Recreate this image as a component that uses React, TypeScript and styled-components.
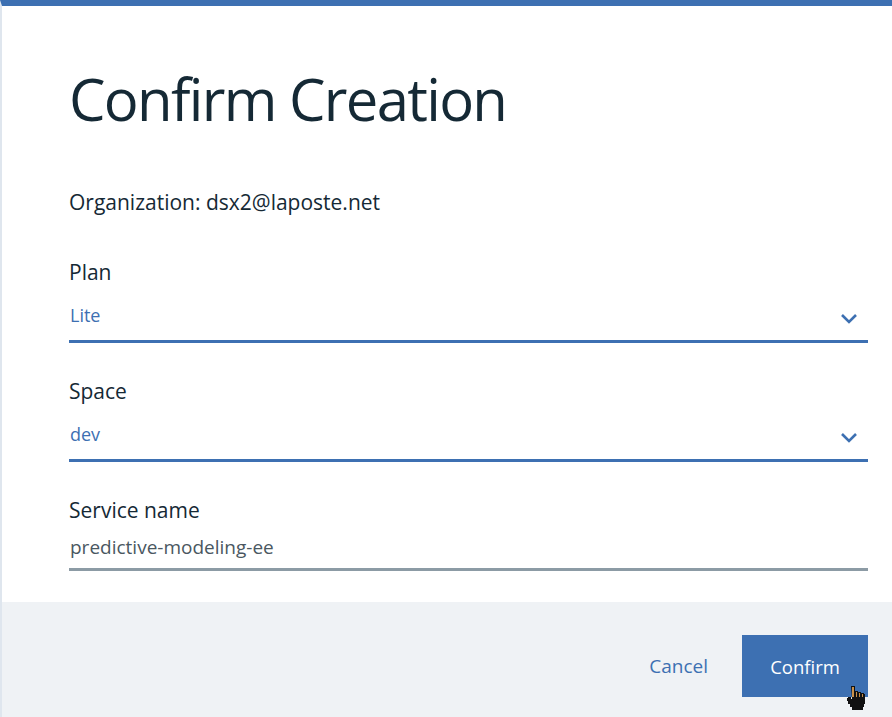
import React from "react";
import styled, {createGlobalStyle} from "styled-components";

const GlobalStyle = createGlobalStyle`
  html, body {
    margin: 0;
    padding: 0;
    background: #ffffff;
  }
  body {
    font-family: "Open Sans", "Noto Sans", sans-serif;
    color: #152935;
  }
`;

const Modal = styled.div`
  width: 892px;
  height: 717px;
  display: flex;
  flex-direction: column;
  border-top: 6px solid #3d70b2;
  border-left: 2px solid #dfe6ee;
  box-sizing: border-box;
  background: #ffffff;
`;

const Body = styled.div`
  flex: 1;
  padding: 57px 24px 0 67px;
  display: flex;
  flex-direction: column;
`;

const Title = styled.h1`
  margin: 0;
  font-size: 58px;
  font-weight: 400;
  line-height: 72px;
  color: #152935;
  letter-spacing: -1.7px;
`;

const Org = styled.p`
  margin: 54px 0 0;
  font-size: 21px;
  line-height: 26px;
  color: #152935;
`;

const Field = styled.div<{gap?: number}>`
  margin-top: ${(p) => p.gap ?? 35}px;
  display: flex;
  flex-direction: column;
`;

const Label = styled.label`
  font-size: 21px;
  line-height: 26px;
  color: #152935;
`;

const Select = styled.div`
  display: flex;
  align-items: flex-start;
  justify-content: space-between;
  height: 58px;
  padding: 19px 10px 0 1px;
  border-bottom: 3px solid #3d70b2;
  box-sizing: border-box;
  font-size: 18px;
  line-height: 22px;
  color: #3d70b2;
`;

const TextInput = styled.div`
  height: 48px;
  padding: 13px 0 0 1px;
  border-bottom: 3px solid #8c9ba5;
  box-sizing: border-box;
  font-size: 19px;
  line-height: 22px;
  color: #4a5761;
`;

const ChevronIcon = styled.svg`
  margin-top: 9px;
`;

const Footer = styled.div`
  height: 115px;
  background: #eff2f5;
  display: flex;
  align-items: flex-start;
  justify-content: flex-end;
  padding: 33px 24px 0 0;
  box-sizing: border-box;
  gap: 34px;
  position: relative;
`;

const GhostButton = styled.button`
  border: none;
  background: none;
  height: 62px;
  padding: 0;
  font-family: inherit;
  font-size: 19px;
  color: #3d70b2;
  cursor: pointer;
`;

const PrimaryButton = styled.button`
  border: none;
  background: #3d70b2;
  width: 126px;
  height: 62px;
  font-family: inherit;
  font-size: 18.5px;
  color: #ffffff;
  cursor: pointer;
`;

const Cursor = styled.svg`
  position: absolute;
  left: 842px;
  top: 82px;
`;

const Chevron = () => (
  <ChevronIcon width="18" height="12" viewBox="0 0 18 12">
    <path d="M2 2 L9 9 L16 2" fill="none" stroke="#3d70b2" strokeWidth="2.6"/>
  </ChevronIcon>
);

export default function App() {
  return (
    <>
      <GlobalStyle/>
      <Modal>
        <Body>
          <Title>Confirm Creation</Title>
          <Org>Organization: dsx2@laposte.net</Org>
          <Field gap={44}>
            <Label>Plan</Label>
            <Select>Lite <Chevron/></Select>
          </Field>
          <Field>
            <Label>Space</Label>
            <Select>dev <Chevron/></Select>
          </Field>
          <Field>
            <Label>Service name</Label>
            <TextInput>predictive-modeling-ee</TextInput>
          </Field>
        </Body>
        <Footer>
          <GhostButton>Cancel</GhostButton>
          <PrimaryButton>Confirm</PrimaryButton>
          <Cursor width="22" height="30" viewBox="0 0 22 30">
            <path d="M7 2 h4 v5 h3 v1 h3 v1 h3 v1 h1 v10 h-1 v3 h-1 v3 h-11 v-3 h-2 v-3 h-2 v-3 h-1 v-3 h1 v-1 h3 v2 h1 z" fill="#111111"/>
            <path d="M8 3 h2 v10 h-2 z M12 8 h1 v5 h-1 z M15 9 h1 v4 h-1 z M18 10 h1 v3 h-1 z" fill="#c8904a"/>
          </Cursor>
        </Footer>
      </Modal>
    </>
  );
}
